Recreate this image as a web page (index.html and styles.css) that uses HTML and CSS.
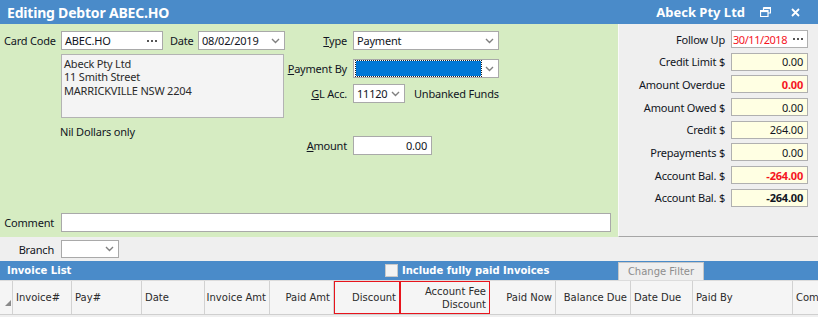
FILE: index.html
```html
<!DOCTYPE html>
<html>
<head>
<meta charset="utf-8">
<link rel="stylesheet" href="styles.css">
</head>
<body>
<div class="win">
  <header class="titlebar">
    <span class="title">Editing Debtor ABEC.HO</span>
    <span class="grow"></span>
    <span class="title-right">Abeck Pty Ltd</span>
    <svg class="ic-restore" width="11" height="10" viewBox="0 0 11 10"><path d="M3.5 0.5h7v5.5h-2M0.5 3.5h7.5v6h-7.5z M3.5 0.5v3" fill="none" stroke="#fff" stroke-width="1.2"/><rect x="0.5" y="3.5" width="7.5" height="1.6" fill="#fff"/><rect x="3.5" y="0.5" width="7" height="1.6" fill="#fff"/></svg>
    <svg class="ic-close" width="9" height="9" viewBox="0 0 9 9"><path d="M1 1l7 7M8 1l-7 7" stroke="#fff" stroke-width="1.8"/></svg>
  </header>

  <div class="main">
    <section class="form">
      <div class="form-top">
        <div class="col-a">
          <div class="row">
            <span class="lbl lbl-first">Card Code</span>
            <div class="field w-card"><span class="val">ABEC.HO</span><span class="dots"><i></i><i></i><i></i></span></div>
            <span class="lbl lbl-date">Date</span>
            <div class="field w-date"><span class="val">08/02/2019</span><svg class="chev" width="9" height="6" viewBox="0 0 9 6"><path d="M1 1l3.5 3.5L8 1" fill="none" stroke="#808080" stroke-width="1.4"/></svg></div>
          </div>
          <div class="address">Abeck Pty Ltd<br>11 Smith Street<br>MARRICKVILLE NSW 2204</div>
          <div class="nil">Nil Dollars only</div>
        </div>
        <div class="col-b">
          <div class="row">
            <span class="lbl lbl-b"><u>T</u>ype</span>
            <div class="field w-wide"><span class="val">Payment</span><svg class="chev" width="9" height="6" viewBox="0 0 9 6"><path d="M1 1l3.5 3.5L8 1" fill="none" stroke="#808080" stroke-width="1.4"/></svg></div>
          </div>
          <div class="row r-pay">
            <span class="lbl lbl-b"><u>P</u>ayment By</span>
            <div class="field w-wide"><span class="sel"></span><svg class="chev" width="9" height="6" viewBox="0 0 9 6"><path d="M1 1l3.5 3.5L8 1" fill="none" stroke="#808080" stroke-width="1.4"/></svg></div>
          </div>
          <div class="row r-gl">
            <span class="lbl lbl-b"><u>G</u>L Acc.</span>
            <div class="field w-gl"><span class="val">11120</span><svg class="chev" width="9" height="6" viewBox="0 0 9 6"><path d="M1 1l3.5 3.5L8 1" fill="none" stroke="#808080" stroke-width="1.4"/></svg></div>
            <span class="gl-name">Unbanked Funds</span>
          </div>
          <div class="row r-amt">
            <span class="lbl lbl-b"><u>A</u>mount</span>
            <div class="field w-amt num"><span class="val">0.00</span></div>
          </div>
        </div>
      </div>
      <div class="row">
        <span class="lbl lbl-r">Comment</span>
        <div class="field w-comment"></div>
      </div>
    </section>

    <aside class="summary">
      <div class="srow"><span class="slbl">Follow Up</span><div class="field sfield white fu"><span class="val red">30/11/2018</span><span class="dots"><i></i><i></i><i></i></span></div></div>
      <div class="srow"><span class="slbl">Credit Limit $</span><div class="field sfield num"><span class="val">0.00</span></div></div>
      <div class="srow"><span class="slbl">Amount Overdue</span><div class="field sfield num"><span class="val red b">0.00</span></div></div>
      <div class="srow"><span class="slbl">Amount Owed $</span><div class="field sfield num"><span class="val">0.00</span></div></div>
      <div class="srow"><span class="slbl">Credit $</span><div class="field sfield num"><span class="val">264.00</span></div></div>
      <div class="srow"><span class="slbl">Prepayments $</span><div class="field sfield num"><span class="val">0.00</span></div></div>
      <div class="srow"><span class="slbl">Account Bal. $</span><div class="field sfield num"><span class="val red b">-264.00</span></div></div>
      <div class="srow"><span class="slbl">Account Bal. $</span><div class="field sfield num"><span class="val b">-264.00</span></div></div>
    </aside>
  </div>

  <div class="branch-row">
    <span class="lbl lbl-r">Branch</span>
    <div class="field w-branch"><svg class="chev" width="9" height="6" viewBox="0 0 9 6"><path d="M1 1l3.5 3.5L8 1" fill="none" stroke="#808080" stroke-width="1.4"/></svg></div>
  </div>

  <div class="list-bar">
    <span class="list-title">Invoice List</span>
    <span class="check"></span>
    <span class="check-lbl">Include fully paid Invoices</span>
    <span class="btn">Change Filter</span>
  </div>

  <div class="grid-head">
    <div class="gc c-ind"><svg width="6" height="6" viewBox="0 0 6 6"><path d="M6 0V6H0z" fill="#8a8a8a"/></svg></div>
    <div class="gc c-inv">Invoice#</div>
    <div class="gc c-pay">Pay#</div>
    <div class="gc c-date">Date</div>
    <div class="gc c-iamt r">Invoice Amt</div>
    <div class="gc c-pamt r">Paid Amt</div>
    <div class="gc c-disc r hl">Discount</div>
    <div class="gc c-afd r hl">Account Fee<br>Discount</div>
    <div class="gc c-pnow r">Paid Now</div>
    <div class="gc c-bal r">Balance Due</div>
    <div class="gc c-due">Date Due</div>
    <div class="gc c-by">Paid By</div>
    <div class="gc c-com">Com</div>
  </div>
</div>
</body>
</html>
```

FILE: styles.css
```css
* { box-sizing: border-box; }
html, body { margin: 0; padding: 0; }
body {
  width: 818px;
  height: 317px;
  overflow: hidden;
  background: #efefef;
  font-family: "Noto Sans", "Open Sans", sans-serif;
  font-size: 11px;
  letter-spacing: -0.2px;
  color: #111522;
}
.win { display: flex; flex-direction: column; width: 818px; }

.titlebar {
  height: 24px;
  background: #4a8bc9;
  display: flex;
  align-items: center;
  color: #fff;
  font-weight: bold;
  letter-spacing: 0;
  padding: 0 18px 0 7px;
}
.title { font-size: 14px; letter-spacing: -0.2px; }
.title-right { font-size: 13px; }
.grow { flex: 1; }
.ic-restore { margin-left: 15px; }
.ic-close { margin-left: 20px; }

.main { display: flex; height: 213px; }
.form {
  width: 618px;
  background: #d6ecc2;
  display: flex;
  flex-direction: column;
  padding: 7px 0 5px 0;
}
.form-top { flex: 1; display: flex; }
.col-a { width: 284px; }
.col-b { display: flex; flex-direction: column; }
.row { display: flex; align-items: center; height: 19px; }

.lbl { white-space: nowrap; }
.lbl-first { width: 61px; padding-left: 4px; flex: none; }
.lbl-date { width: 35px; padding-left: 7px; flex: none; }
.lbl-r { width: 54px; text-align: right; margin-right: 7px; flex: none; }
.lbl-b { width: 63px; text-align: right; margin-right: 6px; flex: none; }

.field {
  flex: none;
  height: 19px;
  background: #fff;
  border: 1px solid #a9a9a9;
  display: flex;
  align-items: center;
  padding: 0 4px 0 3px;
  position: relative;
}
.field .val { flex: 1; white-space: nowrap; }
.num .val { text-align: right; }
.chev { margin-left: auto; flex: none; }
.dots { margin-left: auto; display: flex; gap: 2px; padding-right: 1px; flex: none; }
.dots i { width: 2px; height: 2px; background: #555; display: block; }

.w-card { width: 102px; }
.w-date { width: 87px; }
.w-wide { width: 146px; }
.w-gl { width: 52px; }
.w-amt { width: 79px; }
.w-comment { width: 550px; height: 19px; }
.w-branch { width: 58px; height: 18px; }

.sel {
  width: 125px;
  height: 15px;
  background: #0078d7;
  outline: 1px dotted #222;
  margin-left: -1px;
}
.r-pay { margin-top: 9px; }
.r-gl { margin-top: 6px; }
.r-amt { margin-top: 33px; }
.gl-name { margin-left: 9px; }

.address {
  margin: 4px 0 0 61px;
  width: 223px;
  height: 64px;
  background: #f4f4f4;
  border: 1px solid #b3b3b3;
  padding: 2px 2px;
  line-height: 13.4px;
  color: #2a2a2a;
}
.nil { margin: 7px 0 0 60px; line-height: 14px; }

.summary {
  width: 200px;
  border-left: 1px solid #fafafa;
  border-bottom: 1px solid #a6a6a6;
  background: #efefef;
  padding: 6px 10px 0 0;
  display: flex;
  flex-direction: column;
  gap: 4.7px;
}
.srow { display: flex; align-items: center; justify-content: flex-end; height: 18px; }
.slbl { margin-right: 6px; white-space: nowrap; }
.sfield { width: 77px; height: 18px; background: #ffffe3; border-color: #b0b0b0; }
.sfield.white { background: #fff; }
.fu { padding-left: 1px; padding-right: 3px; }
.fu .val { letter-spacing: -0.45px; }
.red { color: #f5141e; }
.b { font-weight: bold; }

.branch-row { height: 24px; display: flex; align-items: center; }

.list-bar {
  height: 19px;
  background: #4a8bc9;
  display: flex;
  align-items: flex-end;
  color: #fff;
  font-family: "DejaVu Sans", sans-serif;
  font-weight: bold;
  font-size: 10px;
  letter-spacing: 0;
}
.list-title { margin-left: 7px; width: 378px; flex: none; align-self: center; }
.check {
  flex: none;
  align-self: center;
  width: 13px;
  height: 13px;
  background: #f3f3f3;
  border: 1px solid #c9c9c9;
}
.check-lbl { margin-left: 4px; align-self: center; }
.btn {
  margin-left: auto;
  margin-right: 114px;
  width: 86px;
  height: 18px;
  background: #efefef;
  border: 1px solid #c7c7c7;
  border-bottom: none;
  color: #8d8d8d;
  font-weight: normal;
  display: flex;
  align-items: center;
  justify-content: center;
}

.grid-head {
  height: 35px;
  display: flex;
  background: #f5f5f5;
  border-top: 1px solid #dcdcdc;
  border-bottom: 1px solid #cfcfcf;
  font-family: "DejaVu Sans", sans-serif;
  font-size: 10px;
  letter-spacing: 0;
  color: #2b2b2b;
}
.gc {
  flex: none;
  border-right: 1px solid #d2d2d2;
  display: flex;
  align-items: center;
  padding: 0 3px;
  white-space: nowrap;
  line-height: 13px;
}
.gc.r { justify-content: flex-end; text-align: right; }
.gc.hl { border: 1px solid #e8141c; }
.c-ind { width: 13px; padding: 0 1px; align-items: center; justify-content: flex-end; }
.c-ind svg { margin-top: 10px; }
.c-inv { width: 59px; }
.c-pay { width: 70px; }
.c-date { width: 63px; }
.c-iamt { width: 65px; }
.c-pamt { width: 64px; }
.c-disc { width: 66px; }
.c-afd { width: 90px; border-left: none; }
.c-pnow { width: 66px; }
.c-bal { width: 75px; }
.c-due { width: 62px; }
.c-by { width: 100px; }
.c-com { width: 30px; border-right: none; }
```
